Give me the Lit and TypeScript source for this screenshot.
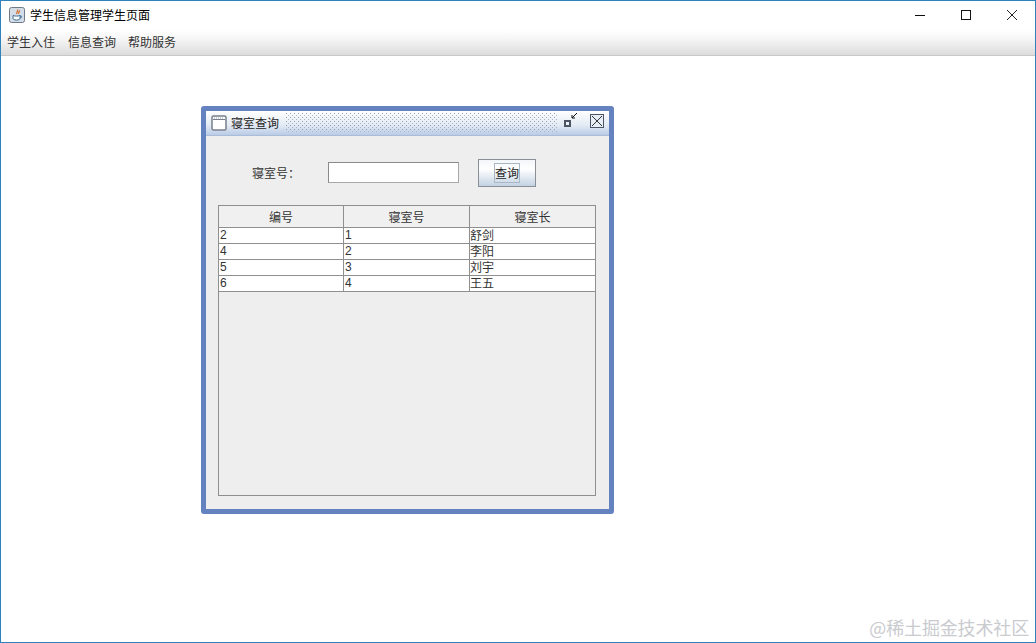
import { LitElement, html, css } from "lit";
import { customElement } from "lit/decorators.js";

const rows = [
  ["2", "1", "舒剑"],
  ["4", "2", "李阳"],
  ["5", "3", "刘宇"],
  ["6", "4", "王五"],
];

@customElement("app-root")
export class AppRoot extends LitElement {
  static styles = css`
    :host {
      display: block;
      width: 1036px;
      height: 643px;
      font-family: "Noto Sans CJK SC", "Liberation Sans", sans-serif;
      font-size: 12px;
      color: #222;
    }
    * { box-sizing: border-box; }
    .win {
      position: relative;
      width: 1036px;
      height: 643px;
      border: 1px solid #2f83ba;
      background: #fff;
      display: flex;
      flex-direction: column;
      overflow: hidden;
    }
    .titlebar {
      height: 29px;
      flex: none;
      display: flex;
      align-items: center;
      padding-left: 8px;
      color: #000;
    }
    .app-icon { width: 16px; height: 16px; margin-right: 5px; margin-top: -1px; }
    .app-title { line-height: 16px; margin-bottom: 2px; }
    .controls { margin-left: auto; display: flex; margin-top: -2px; }
    .ctl { width: 46px; height: 29px; display: flex; align-items: center; justify-content: center; }
    .ctl svg { width: 12px; height: 12px; display: block; }
    .menubar {
      height: 26px;
      flex: none;
      display: flex;
      align-items: center;
      padding: 0 0 2px 6px;
      background: linear-gradient(#ffffff, #f6f6f6 35%, #dcdcdc);
      border-bottom: 1px solid #c8c8c8;
      color: #333;
    }
    .menubar span:nth-child(2) { margin: 0 12px 0 13px; }
    .desk { position: relative; flex: 1; background: #fff; }
    .frame {
      position: absolute;
      left: 200px;
      top: 50px;
      width: 413px;
      height: 408px;
      border: 5px solid #6382bf;
      border-radius: 3px;
      background: #eeeeee;
      display: flex;
      flex-direction: column;
    }
    .ftitle {
      height: 25px;
      flex: none;
      display: flex;
      align-items: center;
      padding-left: 5px;
      background: linear-gradient(#ffffff, #e3eaf4 60%, #b8cbe6);
      border-bottom: 1px solid #a9bcd8;
      color: #222;
    }
    .ficon { width: 16px; height: 16px; margin-right: 4px; flex: none; }
    .ftext { margin-bottom: 2px; }
    .dots {
      margin-left: 7px;
      width: 272px;
      height: 20px;
      flex: none;
      background-image:
        radial-gradient(circle at 0.5px 0.5px, #939eb0 0.7px, transparent 0.75px),
        radial-gradient(circle at 0.5px 0.5px, #a9b3c2 0.7px, transparent 0.75px);
      background-size: 4px 4px;
      background-position: 0 0, 2px 2px;
      background-repeat: repeat;
    }
    .fbtns {
      display: flex;
      align-self: flex-start;
      margin: 2px 0 0 5px;
      gap: 10px;
    }
    .fbtns svg { display: block; }
    .fbody {
      flex: 1;
      padding: 23px 12px 12px;
      display: flex;
      flex-direction: column;
      min-height: 0;
    }
    .form { display: flex; align-items: center; height: 28px; padding-left: 34px; }
    .lab { width: 76px; color: #333; margin-bottom: 2px; }
    .field {
      width: 131px;
      height: 21px;
      align-self: flex-start;
      margin-top: 3px;
      background: #fff;
      border: 1px solid #8a8a8a;
      border-right-color: #a8a8a8;
      border-bottom-color: #a8a8a8;
    }
    .btn {
      margin-left: 19px;
      width: 58px;
      height: 28px;
      border: 1px solid #8a8f96;
      background: linear-gradient(#f3f6fa, #ffffff 35%, #c3d2e2);
      display: flex;
      align-items: center;
      justify-content: center;
      padding: 0;
      font: inherit;
      color: #222;
    }
    .btn span {
      border: 1px solid #a9b6c6;
      line-height: 18px;
      padding: 0;
      width: 26px;
      text-align: center;
      white-space: nowrap;
      display: block;
    }
    .scroll {
      margin-top: 18px;
      width: 378px;
      height: 291px;
      border: 1px solid #8f8f8f;
      flex: none;
      background: #eeeeee;
    }
    .thead, .tr { display: grid; grid-template-columns: 125px 126px 125px; }
    .thead { height: 22px; background: #f0f0f0; }
    .th {
      display: flex;
      align-items: center;
      justify-content: center;
      border-right: 1px solid #8f8f8f;
      border-bottom: 1px solid #8f8f8f;
      color: #333;
    }
    .tr { height: 16px; background: #fff; }
    .td {
      border-right: 1px solid #8f8f8f;
      border-bottom: 1px solid #8f8f8f;
      padding-left: 1px;
      line-height: 15px;
      color: #333;
    }
    .th:last-child, .td:last-child { border-right: 0; }
    .num { font-family: "Liberation Sans", sans-serif; font-size: 12px; }
    .td.name { padding-left: 0; line-height: 13px; }
    .mark {
      position: absolute;
      right: 6px;
      bottom: 3px;
      font-size: 18px;
      line-height: 24px;
      letter-spacing: -0.15px;
      font-family: "Noto Sans CJK SC", sans-serif;
      color: #c9cbcf;
    }
  `;

  render() {
    return html`
      <div class="win">
        <div class="titlebar">
          <svg class="app-icon" viewBox="0 0 16 16">
            <rect x="0.5" y="0.5" width="15" height="15" rx="2" fill="#d3dce7" stroke="#6f7a88" />
            <path d="M8.5 2.5c1.5 1.500-2 2.500-.5 4.500M10.500 3.500c.5 1.200-1.500 1.800-.8 3.200" fill="none" stroke="#d8641c" stroke-width="1.200" />
            <path d="M4 8.500c2 .8 5 .8 7 0v2.500c0 1.500-1 2-3.500 2S4 12.500 4 11z" fill="#fff" stroke="#3c6a96" />
            <path d="M11 9c2-.5 2.500 1.500 0 2.200" fill="none" stroke="#3c6a96" />
          </svg>
          <span class="app-title">学生信息管理学生页面</span>
          <div class="controls">
            <div class="ctl"><svg viewBox="0 0 12 12"><path d="M1 6.500h10" stroke="#111" fill="none" /></svg></div>
            <div class="ctl"><svg viewBox="0 0 12 12"><rect x="1.500" y="1.500" width="9" height="9" fill="none" stroke="#111" /></svg></div>
            <div class="ctl"><svg viewBox="0 0 12 12"><path d="M1 1l10 10M11 1L1 11" stroke="#222" fill="none" /></svg></div>
          </div>
        </div>
        <div class="menubar"><span>学生入住</span><span>信息查询</span><span>帮助服务</span></div>
        <div class="desk">
          <div class="frame">
            <div class="ftitle">
              <svg class="ficon" viewBox="0 0 16 16">
                <rect x="1" y="1" width="14" height="14" rx="1.500" fill="#fff" stroke="#77808c" stroke-width="1.500" />
                <path d="M2 4.500h12" stroke="#77808c" />
                <path d="M3 3h10" stroke="#9aa3ae" stroke-dasharray="1 1" />
              </svg>
              <span class="ftext">寝室查询</span>
              <div class="dots"></div>
              <div class="fbtns">
                <svg width="16" height="16" viewBox="0 0 16 16">
                  <rect x="2" y="8" width="5" height="5" fill="#eef2f8" stroke="#4b5563" stroke-width="2" />
                  <path d="M14 0L9 5M9 2v3h3" fill="none" stroke="#111" />
                </svg>
                <svg width="16" height="16" viewBox="0 0 16 16">
                  <rect x="1.500" y="1.500" width="13" height="13" fill="#e8eef6" stroke="#4b5563" />
                  <path d="M3 3l10 10M13 3L3 13" fill="none" stroke="#333" />
                </svg>
              </div>
            </div>
            <div class="fbody">
              <div class="form">
                <span class="lab">寝室号：</span>
                <div class="field"></div>
                <button class="btn"><span>查询</span></button>
              </div>
              <div class="scroll">
                <div class="thead">
                  <div class="th">编号</div><div class="th">寝室号</div><div class="th">寝室长</div>
                </div>
                ${rows.map(
                  (r) => html`<div class="tr">
                    <div class="td num">${r[0]}</div>
                    <div class="td num">${r[1]}</div>
                    <div class="td name">${r[2]}</div>
                  </div>`
                )}
              </div>
            </div>
          </div>
        </div>
        <div class="mark">@稀土掘金技术社区</div>
      </div>
    `;
  }
}
